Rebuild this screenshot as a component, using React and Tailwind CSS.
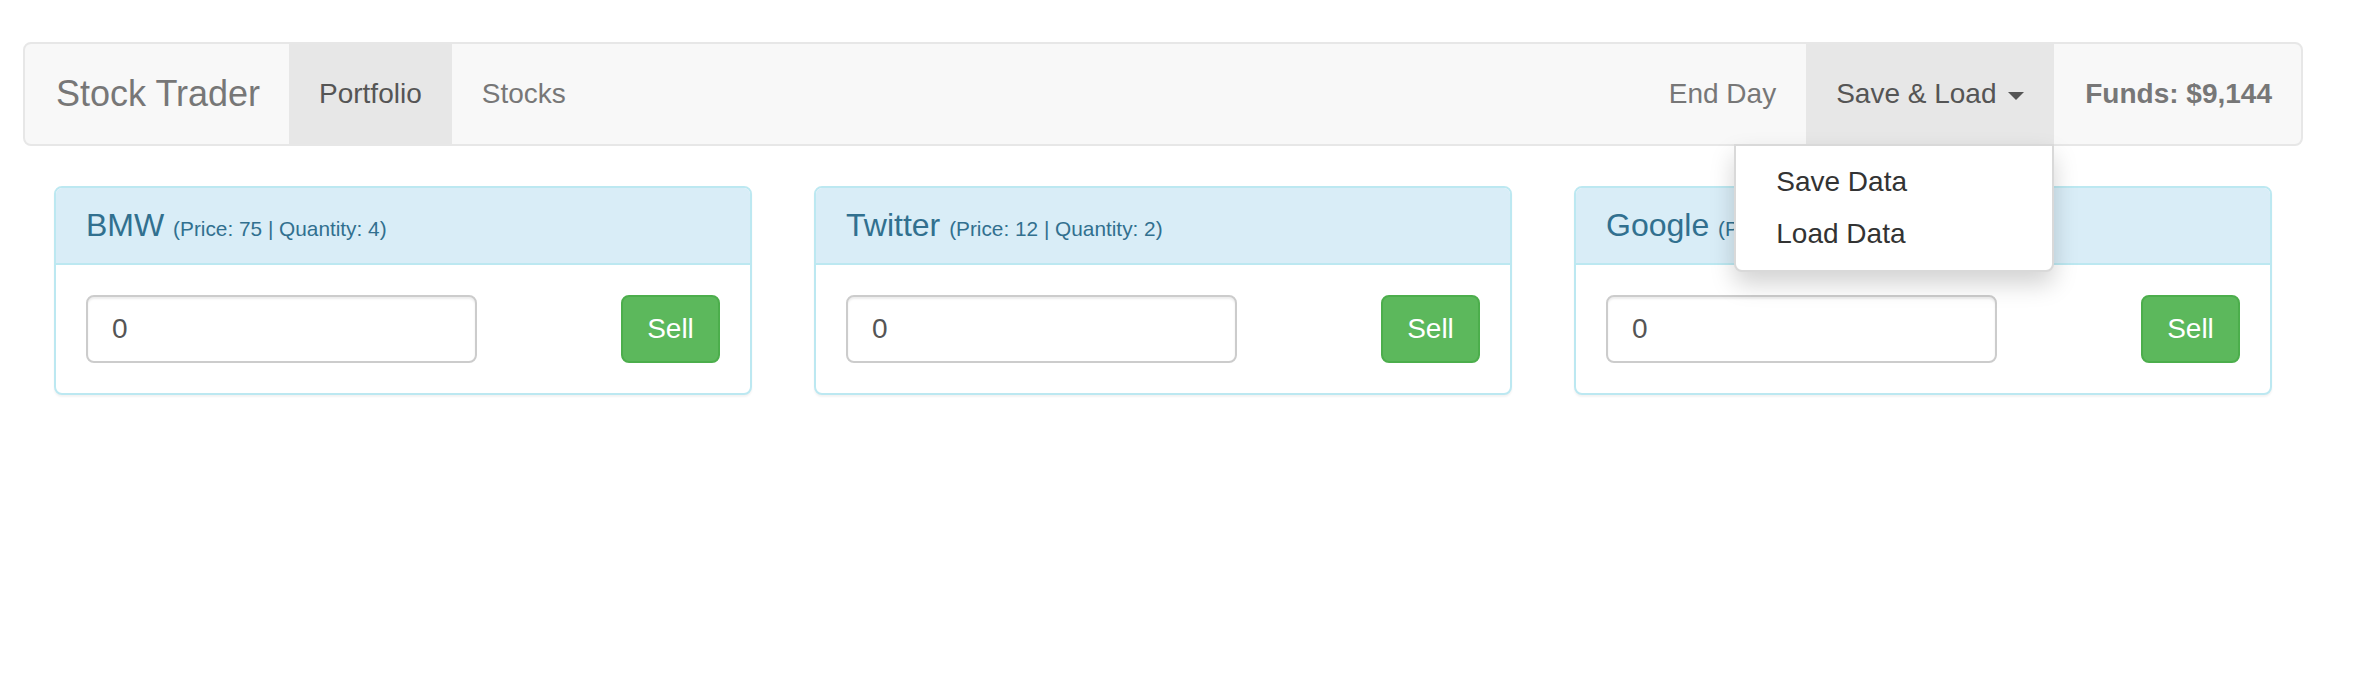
import React from "react";

const stocks = [
  { name: "BMW", price: 75, qty: 4 },
  { name: "Twitter", price: 12, qty: 2 },
  { name: "Google", price: 36, qty: 1 },
];

function Navbar() {
  return (
    <nav className="flex justify-between w-[2280px] ml-[23px] bg-[#f8f8f8] border-2 border-[#e7e7e7] rounded-[8px]">
      <div className="flex">
        <a className="block w-[264px] pl-[31px] py-[30px] text-[36px] leading-[40px] text-[#777]">Stock Trader</a>
        <a className="block px-[30px] py-[30px] text-[28px] leading-[40px] text-[#555] bg-[#e7e7e7]">Portfolio</a>
        <a className="block px-[30px] py-[30px] text-[28px] leading-[40px] text-[#777]">Stocks</a>
      </div>
      <div className="flex">
        <a className="block px-[30px] py-[30px] text-[28px] leading-[40px] text-[#777]">End Day</a>
        <div className="relative">
          <a className="block px-[30px] py-[30px] text-[28px] leading-[40px] text-[#555] bg-[#e7e7e7]">
            Save &amp; Load{" "}
            <span className="inline-block w-0 h-0 ml-[4px] align-middle border-t-[8px] border-t-[#555] border-x-[8px] border-x-transparent"></span>
          </a>
          <ul className="absolute top-full right-0 z-10 w-[320px] py-[10px] bg-white border-2 border-[rgba(0,0,0,0.15)] rounded-b-[8px] shadow-[0_12px_24px_rgba(0,0,0,0.175)]">
            <li className="px-[40px] py-[6px] text-[28px] leading-[40px] text-[#333]">Save Data</li>
            <li className="px-[40px] py-[6px] text-[28px] leading-[40px] text-[#333]">Load Data</li>
          </ul>
        </div>
        <p className="ml-[31px] mr-[29px] my-[30px] text-[28px] leading-[40px] font-bold text-[#777]">Funds: $9,144</p>
      </div>
    </nav>
  );
}

function StockCard({ s }) {
  return (
    <div className="px-[31px]">
      <div className="bg-white border-2 border-[#bce8f1] rounded-[8px] shadow-[0_2px_2px_rgba(0,0,0,0.05)]">
        <div className="bg-[#d9edf7] text-[#31708f] px-[30px] py-[20px] border-b-2 border-[#bce8f1] rounded-t-[6px]">
          <h3 className="text-[32px] leading-[1.1] font-normal">
            {s.name}{" "}
            <small className="text-[20.8px]">(Price: {s.price} | Quantity: {s.qty})</small>
          </h3>
        </div>
        <div className="p-[30px] flex justify-between items-center">
          <input
            type="text"
            readOnly
            value="0"
            className="w-[391px] h-[68px] px-[24px] py-[12px] text-[28px] leading-[40px] text-[#555] bg-white border-2 border-[#ccc] rounded-[8px] shadow-[inset_0_2px_2px_rgba(0,0,0,0.075)] outline-none"
          />
          <button className="w-[99px] h-[68px] px-[24px] text-[28px] leading-[40px] text-white bg-[#5cb85c] border-2 border-[#4cae4c] rounded-[8px]">
            Sell
          </button>
        </div>
      </div>
    </div>
  );
}

export default function App() {
  return (
    <div
      className="min-h-[685px] bg-white pt-[42px] text-[28px] leading-[40px] text-[#333]"
      style={{ fontFamily: '"Liberation Sans", Arial, Helvetica, sans-serif' }}
    >
      <Navbar />
      <div className="grid grid-cols-3 w-[2280px] ml-[23px] mt-[40px]">
        {stocks.map((s) => (
          <StockCard key={s.name} s={s} />
        ))}
      </div>
    </div>
  );
}
